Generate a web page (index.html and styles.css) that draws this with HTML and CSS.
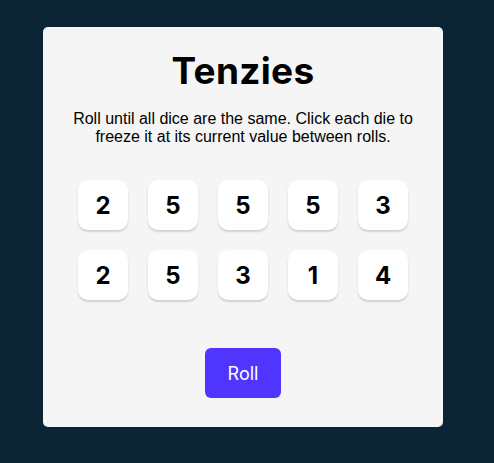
FILE: index.html
```
<!DOCTYPE html>
<html>
<head>
<meta charset="utf-8">
<link rel="stylesheet" href="styles.css">
</head>
<body>
<main class="card">
  <h1 class="title">Tenzies</h1>
  <p class="instructions">Roll until all dice are the same. Click each die to freeze it at its current value between rolls.</p>
  <div class="dice">
    <div class="die">2</div>
    <div class="die">5</div>
    <div class="die">5</div>
    <div class="die">5</div>
    <div class="die">3</div>
    <div class="die">2</div>
    <div class="die">5</div>
    <div class="die">3</div>
    <div class="die">1</div>
    <div class="die">4</div>
  </div>
  <button class="roll">Roll</button>
</main>
</body>
</html>
```
FILE: styles.css
```
html, body {
  margin: 0;
  height: 100%;
}
body {
  background: #0B2434;
  padding: 27px 0 0 43px;
  box-sizing: border-box;
}
.card {
  width: 400px;
  height: 400px;
  background: #F5F5F5;
  border-radius: 5px;
  display: flex;
  flex-direction: column;
  align-items: center;
  box-sizing: border-box;
  padding-top: 20px;
}
.title {
  margin: 0;
  font-family: Inter, sans-serif;
  font-weight: 700;
  font-size: 37px;
  line-height: 48px;
  letter-spacing: 0.3px;
  color: #000;
}
.instructions {
  margin: 15px 0 0;
  padding: 0 20px;
  font-family: "Liberation Sans", Arial, sans-serif;
  font-size: 16px;
  line-height: 18px;
  text-align: center;
  color: #000;
}
.dice {
  margin-top: 34px;
  display: grid;
  grid-template-columns: repeat(5, 50px);
  gap: 20px;
}
.die {
  width: 50px;
  height: 50px;
  background: #fff;
  border-radius: 10px;
  box-shadow: 0 2px 2px rgba(0,0,0,0.15);
  display: flex;
  align-items: center;
  justify-content: center;
  font-family: Inter, sans-serif;
  font-weight: 700;
  font-size: 24px;
  color: #000;
}
.roll {
  margin-top: 48px;
  height: 50px;
  width: 76px;
  border: none;
  border-radius: 6px;
  background: #5035FF;
  color: #fff;
  font-family: Inter, sans-serif;
  font-size: 18px;
  padding: 0;
}
```
